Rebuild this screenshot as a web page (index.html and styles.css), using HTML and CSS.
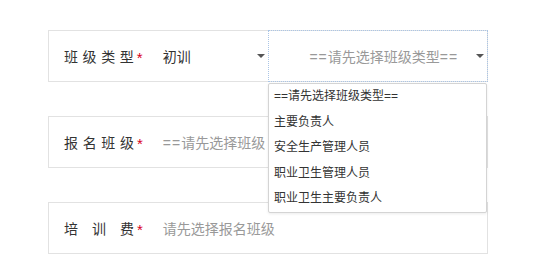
FILE: index.html
```html
<!DOCTYPE html>
<html lang="zh-CN">
<head>
    <meta charset="UTF-8">
    <meta name="viewport" content="width=device-width, initial-scale=1.0">
    <title>报名</title>
    <link rel="stylesheet" href="styles.css">
</head>
<body>

<form class="signup">
    <div class="row">
        <span class="label">班级类型</span><span class="star">*</span>
        <div class="select first">
            <span class="value">初训</span>
            <span class="arrow"></span>
        </div>
        <div class="select second">
            <span class="value muted"><span class="eq">==</span>请先选择班级类型<span class="eq">==</span></span>
            <span class="arrow"></span>
        </div>
        <ul class="options">
            <li>==请先选择班级类型==</li>
            <li>主要负责人</li>
            <li>安全生产管理人员</li>
            <li>职业卫生管理人员</li>
            <li>职业卫生主要负责人</li>
        </ul>
    </div>

    <div class="row">
        <span class="label">报名班级</span><span class="star">*</span>
        <span class="value muted"><span class="eq">==</span>请先选择班级</span>
    </div>

    <div class="row">
        <span class="label">培训费</span><span class="star">*</span>
        <span class="value muted">请先选择报名班级</span>
    </div>
</form>

</body>
</html>
```

FILE: styles.css
```css
body {
    margin: 0;
    background: #fff;
    font-family: "Liberation Sans", "Noto Sans CJK SC", sans-serif;
    font-size: 14px;
    color: #333;
}
.signup {
    padding: 30px 0 0 48px;
    display: flex;
    flex-direction: column;
    gap: 34px;
}
.row {
    position: relative;
    box-sizing: border-box;
    width: 440px;
    height: 52px;
    border: 1px solid #e2e2e2;
    display: flex;
    align-items: center;
    padding-left: 15px;
}
.label {
    width: 70px;
    text-align: justify;
    text-align-last: justify;
    color: #333;
}
.star {
    color: #d9001b;
    font-size: 15px;
    margin: 2px 20px 0 3px;
}
.value {
    white-space: nowrap;
    color: #333;
}
.muted {
    color: #999;
}
.eq {
    letter-spacing: 1px;
}
.select {
    display: flex;
    align-items: center;
    align-self: stretch;
    position: relative;
}
.first {
    width: 106px;
}
.second {
    box-sizing: border-box;
    width: 220px;
    margin: -1px -1px -1px 0;
    border: 1px dotted #aac5e6;
    padding-left: 40px;
}
.arrow {
    position: absolute;
    right: 3px;
    top: 50%;
    margin-top: -2px;
    border-left: 4px solid transparent;
    border-right: 4px solid transparent;
    border-top: 4px solid #555;
}
.options {
    position: absolute;
    left: 219px;
    top: 52px;
    z-index: 2;
    box-sizing: border-box;
    width: 219px;
    margin: 0;
    padding: 0;
    list-style: none;
    background: #fff;
    border: 1px solid #d4d4d4;
    border-radius: 2px;
    box-shadow: 0 1px 3px rgba(0, 0, 0, 0.08);
}
.options li {
    height: 25.6px;
    line-height: 25.6px;
    padding-left: 5px;
    font-size: 12px;
    color: #333;
    white-space: nowrap;
}
```
